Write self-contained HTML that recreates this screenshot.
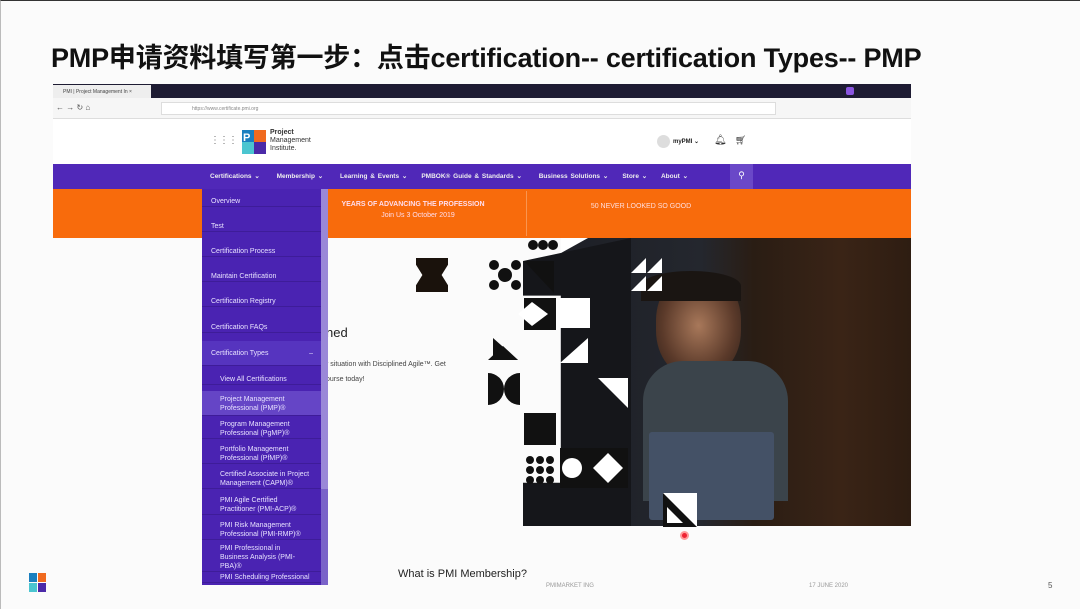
<!DOCTYPE html>
<html><head><meta charset="utf-8"><style>
*{margin:0;padding:0;box-sizing:border-box}
body{width:1080px;height:609px;overflow:hidden;background:#fbfbfb;font-family:"Liberation Sans","Noto Sans CJK SC",sans-serif;position:relative;border-top:1px solid #333;border-left:1px solid #bbb}
.a{position:absolute}
.title{left:50px;top:35px;font-size:27px;font-weight:bold;color:#111;white-space:nowrap;letter-spacing:-0.2px}
.dd div{position:absolute;left:0;width:119px;color:#e8e2ff;font-size:7px;line-height:9px;padding-left:9px;border-bottom:1px solid #3e1c99}
.dd .s{padding-left:18px}
</style></head><body>
<div class="a title">PMP申请资料填写第一步：点击certification-- certification Types-- PMP</div>
<!-- browser -->
<div class="a" style="left:52px;top:83px;width:858px;height:14px;background:#1e1c33"></div>
<div class="a" style="left:52px;top:84px;width:98px;height:13px;background:#eee;font-size:5px;color:#444;padding:4px 0 0 10px">PMI | Project Management In ×</div>
<div class="a" style="left:845px;top:86px;width:8px;height:8px;background:#8a55e0;border-radius:2px"></div>
<div class="a" style="left:52px;top:97px;width:858px;height:21px;background:#f6f6f6;border-bottom:1px solid #ddd"></div>
<div class="a" style="left:160px;top:101px;width:615px;height:13px;background:#fff;border:1px solid #ddd;font-size:5px;color:#888;padding:3px 0 0 30px">https://www.certificate.pmi.org</div>
<div class="a" style="left:55px;top:102px;font-size:8px;color:#555">← → ↻ ⌂</div>
<div class="a" style="left:52px;top:118px;width:858px;height:45px;background:#fff"></div>
<div class="a" style="left:209px;top:134px;font-size:10px;color:#777;letter-spacing:-1px">⋮⋮⋮</div>
<svg class="a" style="left:240px;top:128px" width="26" height="26" viewBox="0 0 26 26"><rect x="1" y="1" width="12" height="12" fill="#1a7fbf"/><rect x="13" y="1" width="12" height="12" fill="#f06a1f"/><rect x="1" y="13" width="12" height="12" fill="#4bc5d0"/><rect x="13" y="13" width="12" height="12" fill="#4b2aa8"/><text x="2" y="12" font-size="11" font-weight="bold" fill="#fff" font-family="Liberation Sans">P</text></svg>
<div class="a" style="left:269px;top:128px;font-size:7px;line-height:8px;color:#333"><b>Project</b><br>Management<br>Institute.</div>
<div class="a" style="left:656px;top:134px;width:13px;height:13px;border-radius:50%;background:#ddd"></div>
<div class="a" style="left:672px;top:137px;font-size:6px;color:#222;font-weight:bold">myPMI ⌄</div>
<div class="a" style="left:713px;top:134px;font-size:10px;color:#333">🔔︎</div>
<div class="a" style="left:734px;top:134px;font-size:9px;color:#333">🛒︎</div>
<div class="a" style="left:52px;top:163px;width:858px;height:25px;background:#5028b8"></div>
<div class="a" style="left:209px;top:171px;font-size:6.5px;font-weight:bold;color:#eee;white-space:nowrap;word-spacing:1px">Certifications ⌄ &nbsp;&nbsp;&nbsp;&nbsp; Membership ⌄ &nbsp;&nbsp;&nbsp;&nbsp; Learning &amp; Events ⌄ &nbsp;&nbsp;&nbsp; PMBOK® Guide &amp; Standards ⌄ &nbsp;&nbsp;&nbsp;&nbsp; Business Solutions ⌄ &nbsp;&nbsp;&nbsp; Store ⌄ &nbsp;&nbsp;&nbsp; About ⌄</div>
<div class="a" style="left:729px;top:163px;width:23px;height:25px;background:#6a48c8;color:#fff;font-size:9px;text-align:center;padding-top:6px">⚲</div>
<div class="a" style="left:52px;top:188px;width:858px;height:49px;background:#f86b0c"></div>
<div class="a" style="left:525px;top:190px;width:1px;height:45px;background:#f99550"></div>
<div class="a" style="left:327px;top:200px;font-size:7px;font-weight:bold;color:#fde;width:170px;text-align:center">YEARS OF ADVANCING THE PROFESSION</div>
<div class="a" style="left:327px;top:211px;font-size:7px;color:#fde;width:180px;text-align:center">Join Us 3 October 2019</div>
<div class="a" style="left:560px;top:202px;font-size:7px;color:#fdd;width:160px;text-align:center">50 NEVER LOOKED SO GOOD</div>
<!-- content -->
<div class="a" style="left:415px;top:257px;width:32px;height:34px;background:#1a120c;clip-path:polygon(0 0,100% 0,100% 20%,80% 50%,100% 80%,100% 100%,0 100%,0 80%,20% 50%,0 20%)"></div>
<div class="a" style="left:325px;top:324px;font-size:13px;color:#222">ned</div>
<div class="a" style="left:325px;top:356px;font-size:7px;color:#444;line-height:15px">r situation with Disciplined Agile™. Get<br>ourse today!</div>
<!-- image -->
<div class="a" style="left:560px;top:237px;width:350px;height:288px;background:linear-gradient(90deg,#1d1f26 0%,#24272e 40%,#2a1d14 55%,#3a2416 80%,#2e1d12 100%)"></div>
<div class="a" style="left:655px;top:272px;width:85px;height:105px;border-radius:45%;background:radial-gradient(#a8785a,#5b3a2a 60%,#2b1e18 100%)"></div>
<div class="a" style="left:640px;top:270px;width:100px;height:30px;border-radius:50% 50% 0 0;background:#1a1512"></div>
<div class="a" style="left:642px;top:360px;width:145px;height:140px;border-radius:40px 40px 0 0;background:#3b444b"></div>
<div class="a" style="left:648px;top:431px;width:125px;height:88px;background:#445166;border-radius:3px"></div>
<div class="a" style="left:522px;top:237px;width:108px;height:288px;background:#15161a;clip-path:polygon(0 8%,100% 0,100% 100%,0 100%,0 85%,35% 85%,35% 20%,0 20%)"></div>
<svg class="a" style="left:487px;top:237px" width="140" height="290" viewBox="0 0 140 290">
<g fill="#111">
<circle cx="55" cy="7" r="5"/><circle cx="45" cy="7" r="5"/><circle cx="65" cy="7" r="5"/>
<circle cx="6" cy="27" r="5"/><circle cx="28" cy="27" r="5"/><circle cx="17" cy="37" r="7"/><circle cx="6" cy="47" r="5"/><circle cx="28" cy="47" r="5"/>
<polygon points="36,23 66,23 66,55"/><rect x="36" y="60" width="32" height="32"/>
<polygon points="5,100 30,122 5,122" /><polygon points="0,122 30,122 15,108"/>
<path d="M0 135a16 16 0 0 1 0 32zM32 135a16 16 0 0 0 0 32z"/>
<rect x="36" y="175" width="32" height="32"/>
<circle cx="42" cy="222" r="4"/><circle cx="52" cy="222" r="4"/><circle cx="62" cy="222" r="4"/><circle cx="42" cy="232" r="4"/><circle cx="52" cy="232" r="4"/><circle cx="62" cy="232" r="4"/><circle cx="42" cy="242" r="4"/><circle cx="52" cy="242" r="4"/><circle cx="62" cy="242" r="4"/>
<rect x="72" y="210" width="68" height="40"/>
</g>
<g fill="#fff">
<polygon points="73,0 100,0 73,15"/><rect x="72" y="60" width="30" height="30"/>
<polygon points="44,64 60,76 44,88 30,76" fill="#fff"/>
<polygon points="72,125 100,100 100,125"/><polygon points="110,140 140,140 140,170"/>
<circle cx="84" cy="230" r="10"/><polygon points="120,215 135,230 120,245 105,230"/>
</g>
</svg>
<svg class="a" style="left:630px;top:257px" width="32" height="34"><polygon points="0,15 15,0 15,15" fill="#fff"/><polygon points="16,15 31,0 31,15" fill="#fff"/><polygon points="0,33 15,18 15,33" fill="#fff"/><polygon points="16,33 31,18 31,33" fill="#fff"/></svg>
<svg class="a" style="left:662px;top:492px" width="34" height="34"><rect width="34" height="34" fill="#fff"/><polygon points="0,0 34,34 0,34" fill="#111"/><polygon points="4,14 20,30 4,30" fill="#fff"/></svg>
<div class="a" style="left:679px;top:530px;width:9px;height:9px;border-radius:50%;background:#e23;border:2px solid #f99"></div>
<div class="a" style="left:397px;top:567px;font-size:11px;color:#222">What is PMI Membership?</div>
<!-- dropdown -->
<div class="a dd" style="left:201px;top:188px;width:126px;height:396px;background:#4a23b2">
<div style="top:8px">Overview</div>
<div style="top:33px">Test</div>
<div style="top:58px">Certification Process</div>
<div style="top:83px">Maintain Certification</div>
<div style="top:108px">Certification Registry</div>
<div style="top:134px">Certification FAQs</div>
<div style="top:152px;height:25px;background:#5634bf;padding-top:8px">Certification Types <span style="float:right;margin-right:8px">–</span></div>
<div class="s" style="top:186px">View All Certifications</div>
<div class="s" style="top:202px;height:25px;background:#6545c6;padding-top:4px">Project Management<br>Professional (PMP)®</div>
<div class="s" style="top:231px">Program Management<br>Professional (PgMP)®</div>
<div class="s" style="top:256px">Portfolio Management<br>Professional (PfMP)®</div>
<div class="s" style="top:281px">Certified Associate in Project<br>Management (CAPM)®</div>
<div class="s" style="top:307px">PMI Agile Certified<br>Practitioner (PMI-ACP)®</div>
<div class="s" style="top:332px">PMI Risk Management<br>Professional (PMI-RMP)®</div>
<div class="s" style="top:355px">PMI Professional in<br>Business Analysis (PMI-<br>PBA)®</div>
<div class="s" style="top:384px">PMI Scheduling Professional</div>
<span class="a" style="left:119px;top:0;width:7px;height:396px;background:#7a63c9"></span>
<span class="a" style="left:119px;top:0;width:7px;height:300px;background:#9a88d8"></span>
</div>
<!-- footer -->
<svg class="a" style="left:28px;top:572px" width="18" height="20"><rect x="0" y="0" width="8" height="9" fill="#1a7fbf"/><rect x="9" y="0" width="8" height="9" fill="#f06a1f"/><rect x="0" y="10" width="8" height="9" fill="#4bc5d0"/><rect x="9" y="10" width="8" height="9" fill="#4b2aa8"/></svg>
<div class="a" style="left:545px;top:582px;font-size:6px;color:#999">PMIMARKET ING</div>
<div class="a" style="left:808px;top:582px;font-size:6px;color:#999">17 JUNE 2020</div>
<div class="a" style="left:1047px;top:580px;font-size:8px;color:#555">5</div>
</body></html>
